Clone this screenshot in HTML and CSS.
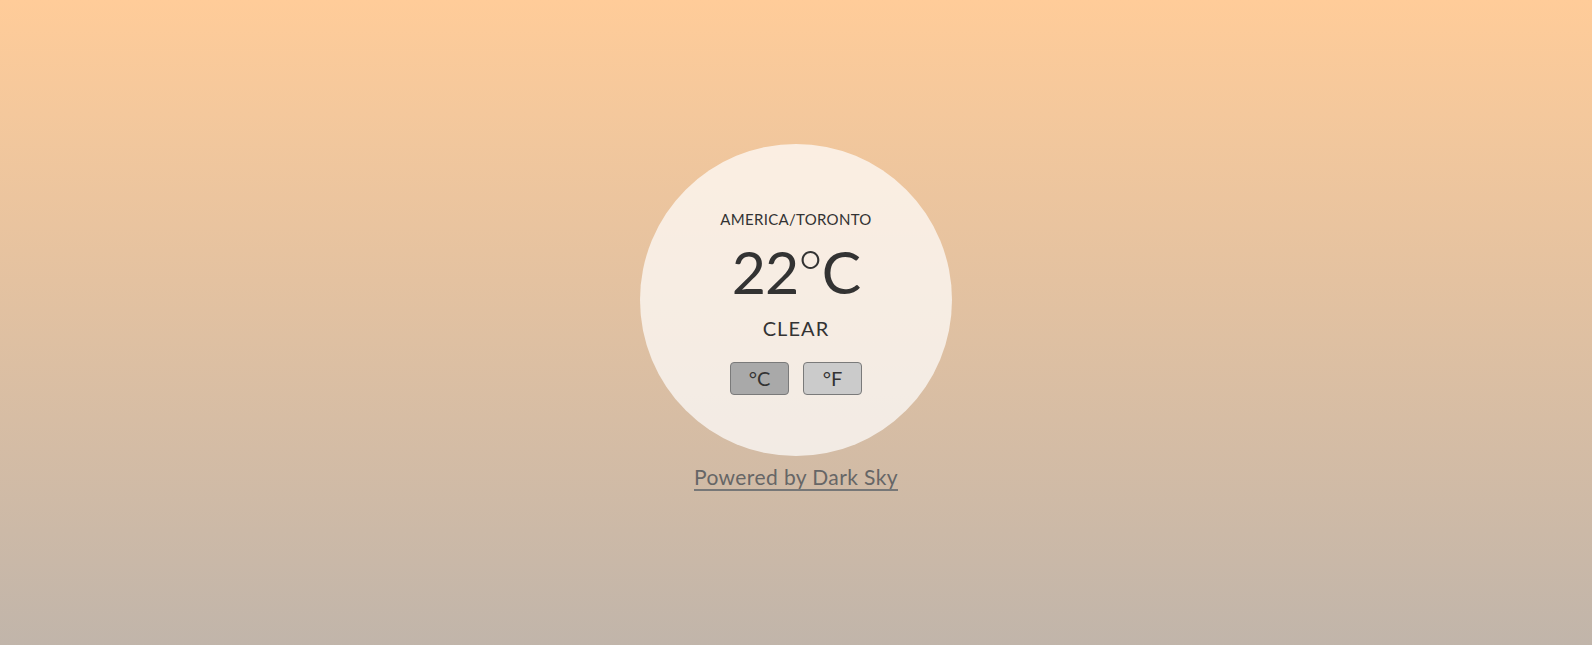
FILE: index.html
```html
<!DOCTYPE html>
<html lang="en">
<head>
<meta charset="utf-8">
<title>Weather</title>
<link rel="stylesheet" href="styles.css">
</head>
<body>
<main class="page">
  <section class="card">
    <div class="location">AMERICA/TORONTO</div>
    <div class="temp">22<span class="deg">°</span>C</div>
    <div class="summary">CLEAR</div>
    <div class="units">
      <button class="unit active">°C</button>
      <button class="unit">°F</button>
    </div>
  </section>
  <a class="credit" href="#">Powered by Dark Sky</a>
</main>
</body>
</html>
```

FILE: styles.css
```css
html, body {
  margin: 0;
  height: 100%;
}
body {
  background: linear-gradient(to bottom, #ffcc99 0%, #c1b5aa 100%);
  font-family: Lato, "Open Sans", "Liberation Sans", sans-serif;
  color: #333;
}
.page {
  height: 100%;
  box-sizing: border-box;
  padding-bottom: 12px;
  display: flex;
  flex-direction: column;
  align-items: center;
  justify-content: center;
}
.card {
  width: 312px;
  height: 312px;
  border-radius: 50%;
  background: rgba(255, 255, 255, 0.7);
  display: flex;
  flex-direction: column;
  align-items: center;
  justify-content: center;
  padding-top: 4px;
  box-sizing: border-box;
}
.location {
  font-size: 15px;
  letter-spacing: 0.3px;
  line-height: 18px;
}
.temp {
  font-size: 59px;
  line-height: 62px;
  margin-top: 13px;
  font-weight: 400;
  letter-spacing: -1px;
}
.deg {
  font-weight: 300;
}
.summary {
  font-size: 20px;
  line-height: 22px;
  margin-top: 14px;
  letter-spacing: 1.1px;
}
.units {
  display: flex;
  gap: 14px;
  margin-top: 23px;
}
.unit {
  width: 59px;
  height: 33px;
  border: 1px solid #7a7a7a;
  border-radius: 4px;
  background: #cbcbcb;
  color: #333;
  font-family: inherit;
  font-size: 20px;
  padding: 0;
}
.unit.active {
  background: #a9a9a9;
}
.credit {
  margin-top: 8px;
  font-size: 21px;
  color: #666;
  text-decoration: underline;
  text-decoration-color: #777;
  text-underline-offset: 4px;
  letter-spacing: 0.4px;
}
```
